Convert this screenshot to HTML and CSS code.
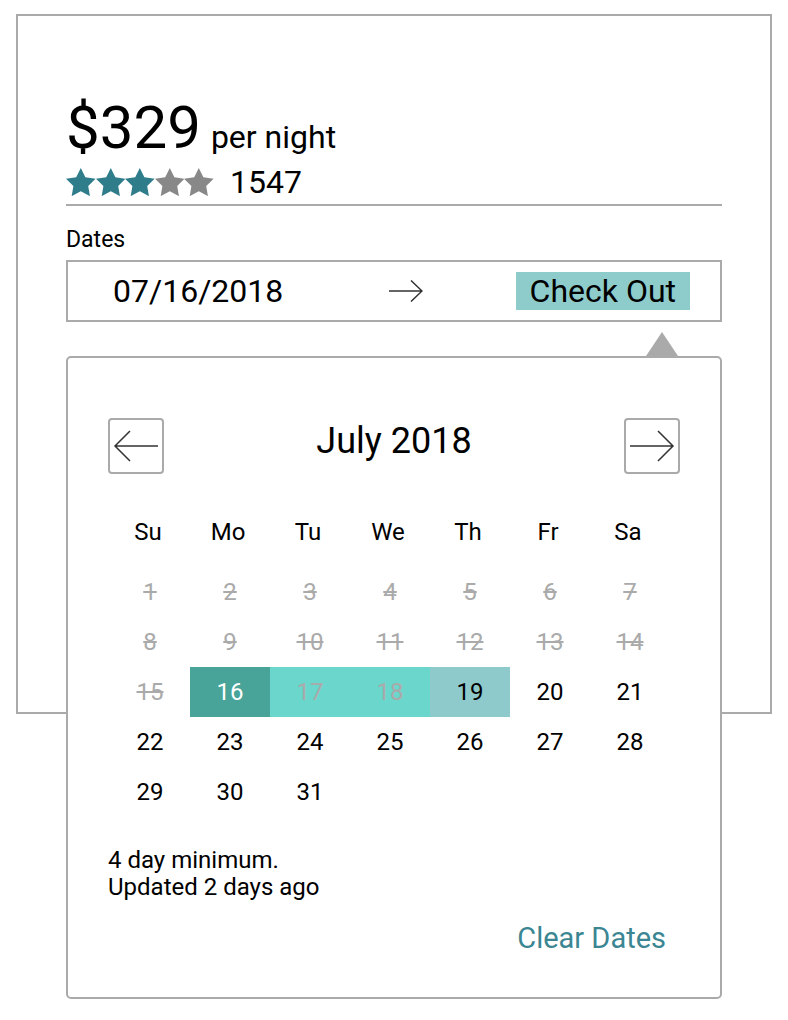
FILE: index.html
```html
<!DOCTYPE html>
<html lang="en">
<head>
<meta charset="utf-8">
<title>Booking</title>
<link rel="stylesheet" href="styles.css">
</head>
<body>
<div class="card">
  <div class="price-row">
    <span class="price">$329</span>
    <span class="per">per night</span>
  </div>
  <div class="rating-row">
    <span class="stars">
      <svg class="star on" viewBox="2 2 20 19.1"><polygon points="12,2 15.09,8.26 22,9.27 17,14.14 18.18,21.02 12,17.77 5.82,21.02 7,14.14 2,9.27 8.91,8.26"/></svg>
      <svg class="star on" viewBox="2 2 20 19.1"><polygon points="12,2 15.09,8.26 22,9.27 17,14.14 18.18,21.02 12,17.77 5.82,21.02 7,14.14 2,9.27 8.91,8.26"/></svg>
      <svg class="star on" viewBox="2 2 20 19.1"><polygon points="12,2 15.09,8.26 22,9.27 17,14.14 18.18,21.02 12,17.77 5.82,21.02 7,14.14 2,9.27 8.91,8.26"/></svg>
      <svg class="star off" viewBox="2 2 20 19.1"><polygon points="12,2 15.09,8.26 22,9.27 17,14.14 18.18,21.02 12,17.77 5.82,21.02 7,14.14 2,9.27 8.91,8.26"/></svg>
      <svg class="star off" viewBox="2 2 20 19.1"><polygon points="12,2 15.09,8.26 22,9.27 17,14.14 18.18,21.02 12,17.77 5.82,21.02 7,14.14 2,9.27 8.91,8.26"/></svg>
    </span>
    <span class="count">1547</span>
  </div>
  <div class="divider"></div>
  <div class="label">Dates</div>
  <div class="date-input">
    <span class="check-in">07/16/2018</span>
    <svg class="field-arrow" viewBox="0 0 34 22"><path d="M0 11H33M22 0.5L33 11L22 21.5"/></svg>
    <span class="check-out">Check Out</span>
  </div>
  <div class="popover">
    <div class="cal-head">
      <button class="nav-btn" aria-label="Previous month"><svg viewBox="0 0 52 52"><path d="M6 26H48M20 11L5 26L20 41"/></svg></button>
      <div class="month">July 2018</div>
      <button class="nav-btn" aria-label="Next month"><svg viewBox="0 0 52 52"><path d="M4 26H46M32 11L47 26L32 41"/></svg></button>
    </div>
    <div class="weekdays">
      <span>Su</span><span>Mo</span><span>Tu</span><span>We</span><span>Th</span><span>Fr</span><span>Sa</span>
    </div>
    <div class="days">
      <span class="day past">1</span><span class="day past">2</span><span class="day past">3</span><span class="day past">4</span><span class="day past">5</span><span class="day past">6</span><span class="day past">7</span>
      <span class="day past">8</span><span class="day past">9</span><span class="day past">10</span><span class="day past">11</span><span class="day past">12</span><span class="day past">13</span><span class="day past">14</span>
      <span class="day past">15</span><span class="day start">16</span><span class="day between">17</span><span class="day between">18</span><span class="day hover">19</span><span class="day">20</span><span class="day">21</span>
      <span class="day">22</span><span class="day">23</span><span class="day">24</span><span class="day">25</span><span class="day">26</span><span class="day">27</span><span class="day">28</span>
      <span class="day">29</span><span class="day">30</span><span class="day">31</span>
    </div>
    <div class="notes">
      <div>4 day minimum.</div>
      <div>Updated 2 days ago</div>
    </div>
    <div class="clear">Clear Dates</div>
  </div>
</div>
</body>
</html>
```

FILE: styles.css
```css
* { box-sizing: border-box; }

html, body { min-height: 1020px; }

body {
  margin: 0;
  background: #fff;
  font-family: Roboto, "Liberation Sans", Arial, sans-serif;
  color: #000;
}

.card {
  margin: 14px 0 0 16px;
  width: 756px;
  height: 700px;
  border: 2px solid #aaa;
  padding: 80px 48px 0 48px;
}

.price-row {
  display: flex;
  align-items: baseline;
  gap: 10px;
  height: 64px;
  line-height: 64px;
}

.price { font-size: 60px; }
.per { font-size: 32px; }

.rating-row {
  display: flex;
  align-items: center;
  height: 32px;
  margin-top: 6px;
}

.stars { display: flex; }

.star {
  width: 29.6px;
  height: 28.3px;
  display: block;
}
.star.on { fill: #2f7d8b; }
.star.off { fill: #888; }

.count {
  font-size: 32px;
  margin-left: 16px;
  line-height: 32px;
}

.divider {
  height: 2px;
  background: #aaa;
  margin-top: 6px;
}

.label {
  margin-top: 22px;
  font-size: 23px;
  line-height: 24px;
}

.date-input {
  margin-top: 8px;
  height: 62px;
  border: 2px solid #aaa;
  display: flex;
  align-items: center;
  padding: 0 30px 0 45px;
  font-size: 32px;
}

.field-arrow {
  width: 34px;
  height: 22px;
  margin-left: 106px;
  fill: none;
  stroke: #333;
  stroke-width: 1.5;
}

.check-out {
  margin-left: auto;
  background: #8ecbcb;
  height: 38px;
  line-height: 38px;
  padding: 0 14px;
}

.popover {
  position: relative;
  margin-top: 34px;
  width: 656px;
  height: 643px;
  border: 2px solid #aaa;
  border-radius: 5px;
  background: #fff;
  padding: 60px 40px 0 40px;
}

.popover::before {
  content: "";
  position: absolute;
  top: -26px;
  right: 42px;
  border-left: 16px solid transparent;
  border-right: 16px solid transparent;
  border-bottom: 24px solid #aaa;
}

.cal-head {
  display: flex;
  justify-content: space-between;
  align-items: center;
  height: 56px;
}

.nav-btn {
  width: 56px;
  height: 56px;
  border: 2px solid #aaa;
  border-radius: 4px;
  background: #fff;
  padding: 0;
  display: flex;
  align-items: center;
  justify-content: center;
}

.nav-btn svg {
  width: 52px;
  height: 52px;
  fill: none;
  stroke: #333;
  stroke-width: 1.5;
}

.month {
  font-size: 36px;
  margin-top: -10px;
}

.weekdays, .days {
  display: grid;
  grid-template-columns: repeat(7, 80px);
  grid-auto-rows: 50px;
  margin-left: 2px;
}

.weekdays {
  margin-top: 33px;
  font-size: 24px;
}

.weekdays span {
  display: flex;
  align-items: center;
  justify-content: center;
  margin-left: -4px;
}

.days {
  margin-top: 10px;
  font-size: 24px;
}

.day {
  display: flex;
  align-items: center;
  justify-content: center;
}

.day.past {
  color: #aaa;
  text-decoration: line-through;
}

.day.start { background: #48a398; color: #fff; }
.day.between { background: #6bd6cc; color: #aaa; }
.day.hover { background: #8ecacb; color: #000; }

.notes {
  margin-top: 30px;
  font-size: 24px;
  line-height: 27px;
}

.clear {
  margin-top: 21px;
  text-align: right;
  padding-right: 14px;
  font-size: 29px;
  line-height: 32px;
  color: #3b8692;
}
```
